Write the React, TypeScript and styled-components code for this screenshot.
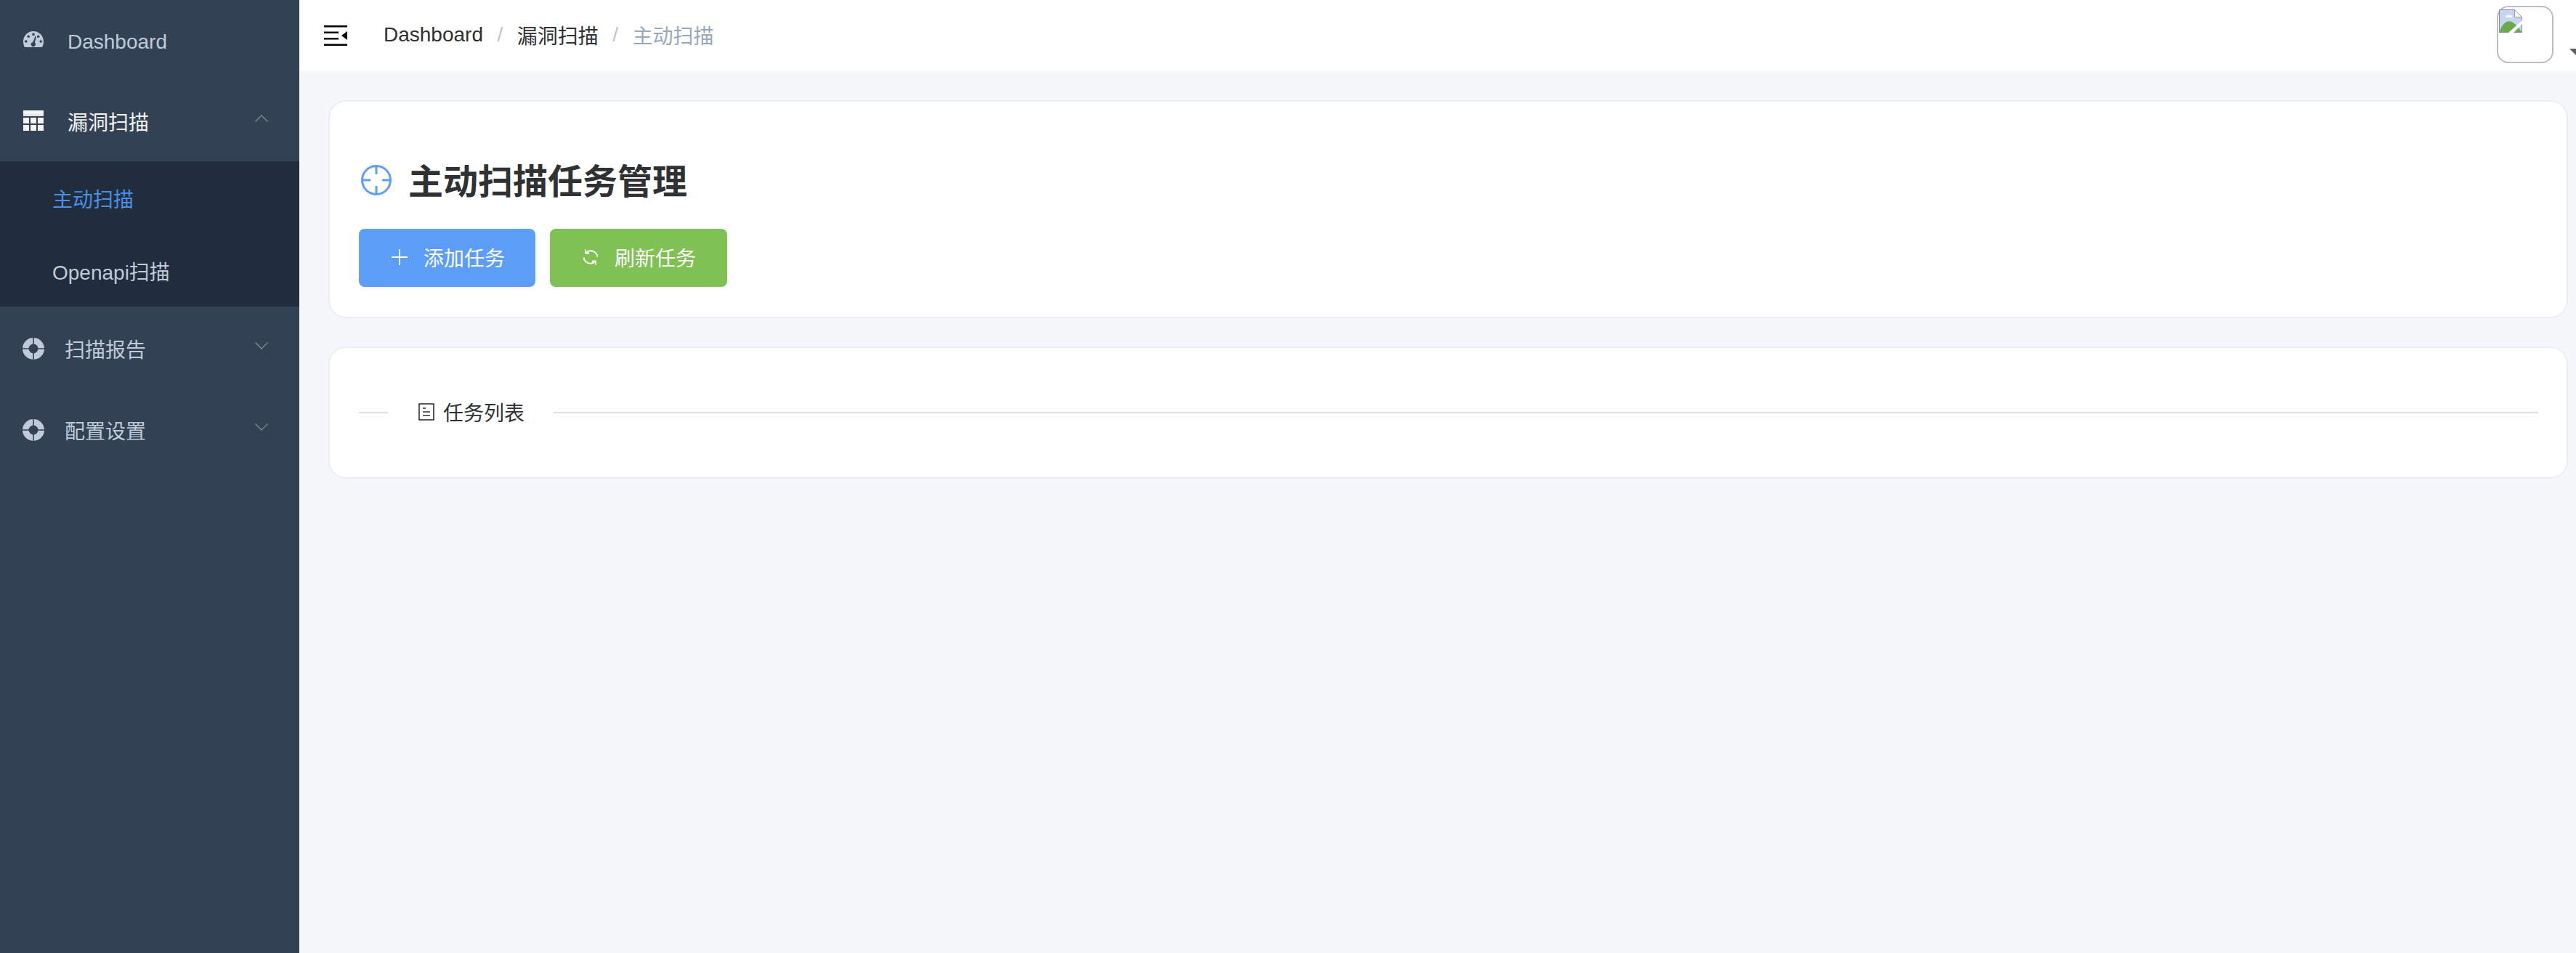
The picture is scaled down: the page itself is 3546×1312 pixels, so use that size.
import styled, { createGlobalStyle } from 'styled-components';

const GlobalStyle = createGlobalStyle`
  html, body {
    margin: 0;
    padding: 0;
    background: #f5f7fb;
    font-family: 'Liberation Sans', 'Noto Sans CJK SC', sans-serif;
    overflow: hidden;
  }
  * { box-sizing: border-box; }
`;

const Shell = styled.div`
  display: flex;
  width: 3546px;
  height: 1312px;
  overflow: hidden;
`;

const Sidebar = styled.aside`
  flex: 0 0 412px;
  background: #334155;
`;

const MenuRow = styled.div<{ $h: number; $active?: boolean; $top?: number }>`
  display: flex;
  align-items: center;
  height: ${(p) => p.$h}px;
  padding: ${(p) => p.$top ?? 0}px 43px 0 31px;
  font-size: 28px;
  color: ${(p) => (p.$active ? '#f4f4f5' : '#bfcbd9')};
`;

const MenuIcon = styled.span<{ $w: number; $lift?: number }>`
  display: flex;
  justify-content: center;
  width: 30px;
  margin-top: ${(p) => -(p.$lift ?? 0)}px;
  margin-right: ${(p) => p.$w}px;
  flex: none;
`;

const MenuLabel = styled.span`
  flex: 1;
`;

const Submenu = styled.div`
  height: 200px;
  padding-top: 1px;
  background: #212d3c;
`;

const SubRow = styled.div<{ $active?: boolean }>`
  display: flex;
  align-items: center;
  height: 100px;
  padding-left: 72px;
  font-size: 28px;
  color: ${(p) => (p.$active ? '#4a90e8' : '#bfcbd9')};
`;

const ChevronIcon = styled.svg`
  width: 18px;
  height: 10px;
  margin-top: -8px;
  flex: none;
`;

const Main = styled.main`
  flex: 1;
  min-width: 0;
  display: flex;
  flex-direction: column;
`;

const TopBar = styled.header`
  display: flex;
  align-items: center;
  height: 98px;
  padding: 0 31px 0 34px;
  background: #fff;
`;

const Crumbs = styled.nav`
  display: flex;
  align-items: center;
  flex: 1;
  margin-left: 50px;
  padding-bottom: 2px;
  font-size: 28px;
`;

const Crumb = styled.span<{ $current?: boolean }>`
  color: ${(p) => (p.$current ? '#97a8be' : '#303133')};
`;

const Slash = styled.span`
  margin: 0 19.5px;
  color: #c0c4cc;
`;

const AvatarBox = styled.div`
  position: relative;
  width: 78px;
  height: 79px;
  margin-top: -3px;
  padding: 3px 0 0 1px;
  border: 2px solid #bdbdbd;
  border-radius: 16px;
  background: #fff;
`;

const Caret = styled.span`
  position: absolute;
  left: 98px;
  top: 57px;
  width: 0;
  height: 0;
  border-left: 9px solid transparent;
  border-right: 9px solid transparent;
  border-top: 9px solid #5a5e66;
`;

const Content = styled.div`
  flex: 1;
  display: flex;
  flex-direction: column;
  gap: 39px;
  padding: 40px 11px 0 40px;
`;

const Card = styled.section`
  background: #fff;
  border: 2px solid #ebeef5;
  border-radius: 24px;
`;

const TaskCard = styled(Card)`
  height: 300px;
  padding: 76px 40px 0;
`;

const TitleRow = styled.div`
  display: flex;
  align-items: center;
  height: 60px;
  margin-bottom: 39px;
  font-size: 48px;
  font-weight: 700;
  color: #303133;
`;

const TitleIcon = styled.svg`
  width: 42px;
  height: 42px;
  margin: 3px 23px 0 3px;
  flex: none;
`;

const Actions = styled.div`
  display: flex;
  gap: 20px;
`;

const ActionButton = styled.button<{ $color: string; $w: number }>`
  display: flex;
  align-items: center;
  gap: 22px;
  width: ${(p) => p.$w}px;
  height: 80px;
  padding: 0 0 2px 45px;
  border: 0;
  border-radius: 8px;
  background: ${(p) => p.$color};
  color: #fff;
  font-family: inherit;
  font-size: 28px;
`;

const ListCard = styled(Card)`
  display: flex;
  align-items: center;
  height: 182px;
  padding: 0 39px 0 40px;
`;

const Rule = styled.div<{ $grow?: boolean }>`
  width: 40px;
  height: 2px;
  flex: ${(p) => (p.$grow ? '1' : 'none')};
  background: #dcdfe6;
`;

const RuleText = styled.div`
  display: flex;
  align-items: center;
  gap: 12px;
  padding: 0 40px 3px 42px;
  font-size: 28px;
  color: #303133;
`;

const Gauge = () => (
  <svg width="28" height="22" viewBox="0 0 28 22">
    <path
      fill="#bfcbd9"
      fillRule="evenodd"
      d="M14 0C6.3 0 0 6.3 0 14c0 2.8.6 5.400 1.700 7.400.2.400.6.600 1 .600h22.600c.4 0 .8-.2 1-.6C27.400 19.400 28 16.800 28 14 28 6.300 21.700 0 14 0zM14 2.600a1.800 1.800 0 1 1 0 3.600 1.800 1.800 0 0 1 0-3.600zM7.200 5.400a1.800 1.800 0 1 1 0 3.600 1.800 1.800 0 0 1 0-3.600zM3.800 12.200a1.800 1.800 0 1 1 0 3.600 1.800 1.800 0 0 1 0-3.600zM24.200 12.200a1.800 1.800 0 1 1 0 3.600 1.800 1.800 0 0 1 0-3.600zM20.800 5.400a1.800 1.800 0 1 1 0 3.600 1.800 1.800 0 0 1 0-3.600zM16.700 6.800l1.300.4-2.200 8.300a3.200 3.200 0 1 1-2.500-.6z"
    />
  </svg>
);

const TableGlyph = () => (
  <svg width="28" height="28" viewBox="0 0 28 28">
    <rect width="28" height="5" fill="#f4f4f5" />
    <rect y="5" width="28" height="3" fill="#e4e4e6" />
    {[10, 20].map((y) =>
      [0, 10, 20].map((x) => <rect key={`${y}-${x}`} x={x} y={y} width="8" height="8" fill="#f4f4f5" />),
    )}
  </svg>
);

const Buoy = () => (
  <svg width="30" height="30" viewBox="0 0 30 30">
    <circle cx="15" cy="15" r="15" fill="#bfcbd9" />
    <circle cx="15" cy="15" r="6.500" fill="#334155" />
    <path d="M14.200 0h1.600v30h-1.600zM0 14.200h30v1.600H0z" fill="#334155" />
  </svg>
);

const Chevron = ({ up }: { up?: boolean }) => (
  <ChevronIcon viewBox="0 0 18 10" fill="none" stroke="#7d8894" strokeWidth="1.400">
    <path d={up ? 'M.5 9.500 9 1l8.500 8.500' : 'M.5.500 9 9l8.500-8.500'} />
  </ChevronIcon>
);

// four bars and a left-pointing arrow, the "fold" icon
const Hamburger = () => (
  <svg width="32" height="28" viewBox="0 0 32 28">
    <path d="M0 0h32v2.500H0zM0 8.500h20V11H0zM0 17h20v2.500H0zM0 25.500h32V28H0z" fill="#000" />
    <path d="M32 8v12l-8-6z" fill="#000" />
  </svg>
);

const BrokenImage = () => (
  <svg width="32" height="32" viewBox="0 0 32 32">
    <path d="M.5.500h21l10 10v21H.5z" fill="#c6d6f2" stroke="#8a8a8a" />
    <path d="M21.500.500v10h10z" fill="#fff" stroke="#9a9a9a" />
    <path d="M1 31c3-12 11-18 18-13 5 3 9 8 12 13z" fill="#6bab4b" />
    <path d="M9 11c0-3 3-4 5-3 2-1 5 0 5 3z" fill="#fff" />
    <path d="M13 32 32 15v5L20 32z" fill="#fff" />
  </svg>
);

const Crosshair = () => (
  <TitleIcon viewBox="0 0 42 42" fill="none" stroke="#5c9df8" strokeWidth="3">
    <circle cx="21" cy="21" r="19.500" />
    <path d="M21 2v11M21 29v11M2 21h11M29 21h11" />
  </TitleIcon>
);

const Plus = () => (
  <svg width="22" height="22" viewBox="0 0 22 22" fill="none" stroke="#fff" strokeWidth="1.800">
    <path d="M11 0v22M0 11h22" />
  </svg>
);

const Refresh = () => (
  <svg width="22" height="22" viewBox="0 0 22 22" fill="none" stroke="#fff" strokeWidth="1.800">
    <path d="M20.500 10.500A9.500 9.500 0 0 0 4.500 5" />
    <path d="M4 .500V5.500h5" />
    <path d="M1.500 11.500A9.500 9.500 0 0 0 17.500 17" />
    <path d="M18 21.500V16.500h-5" />
  </svg>
);

const DocIcon = () => (
  <svg width="22" height="24" viewBox="0 0 22 24" fill="none" stroke="#303133" strokeWidth="1.600">
    <rect x="1" y="1" width="20" height="22" />
    <path d="M6 7h4M6 12h10M6 17h10" />
  </svg>
);

export default function App() {
  return (
    <Shell>
      <GlobalStyle />
      <Sidebar>
        <MenuRow $h={112} $top={3}>
          <MenuIcon $w={32} $lift={7}>
            <Gauge />
          </MenuIcon>
          <MenuLabel>Dashboard</MenuLabel>
        </MenuRow>
        <MenuRow $h={110} $active>
          <MenuIcon $w={32} $lift={2}>
            <TableGlyph />
          </MenuIcon>
          <MenuLabel>漏洞扫描</MenuLabel>
          <Chevron up />
        </MenuRow>
        <Submenu>
          <SubRow $active>主动扫描</SubRow>
          <SubRow>Openapi扫描</SubRow>
        </Submenu>
        <MenuRow $h={116}>
          <MenuIcon $w={28}>
            <Buoy />
          </MenuIcon>
          <MenuLabel>扫描报告</MenuLabel>
          <Chevron />
        </MenuRow>
        <MenuRow $h={108}>
          <MenuIcon $w={28}>
            <Buoy />
          </MenuIcon>
          <MenuLabel>配置设置</MenuLabel>
          <Chevron />
        </MenuRow>
      </Sidebar>
      <Main>
        <TopBar>
          <Hamburger />
          <Crumbs>
            <Crumb>Dashboard</Crumb>
            <Slash>/</Slash>
            <Crumb>漏洞扫描</Crumb>
            <Slash>/</Slash>
            <Crumb $current>主动扫描</Crumb>
          </Crumbs>
          <AvatarBox>
            <BrokenImage />
            <Caret />
          </AvatarBox>
        </TopBar>
        <Content>
          <TaskCard>
            <TitleRow>
              <Crosshair />
              主动扫描任务管理
            </TitleRow>
            <Actions>
              <ActionButton $color="#5c9df8" $w={243}>
                <Plus />
                添加任务
              </ActionButton>
              <ActionButton $color="#7fc152" $w={244}>
                <Refresh />
                刷新任务
              </ActionButton>
            </Actions>
          </TaskCard>
          <ListCard>
            <Rule />
            <RuleText>
              <DocIcon />
              任务列表
            </RuleText>
            <Rule $grow />
          </ListCard>
        </Content>
      </Main>
    </Shell>
  );
}
